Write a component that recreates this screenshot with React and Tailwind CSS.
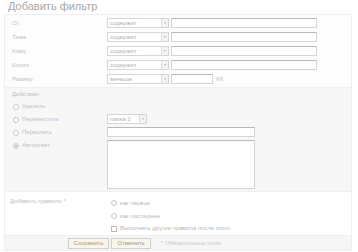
import React from 'react';

const font = { fontFamily: '"Liberation Sans", Arial, sans-serif' };

const Select = ({ value, w = 'w-[62px]' }) => (
  <div className={`${w} h-[10px] flex items-center border border-[#d6d6d6] bg-white`}>
    <span className="flex-1 pl-[2px] text-[6px] leading-none text-[#b0b0b0] truncate">{value}</span>
    <span className="w-[7px] h-full border-l border-[#dcdcdc] bg-[#f3f3f3] flex items-center justify-center text-[4px] text-[#bbb]">▾</span>
  </div>
);

const Input = ({ w = 'w-[146px]', h = 'h-[10px]' }) => (
  <div className={`${w} ${h} border border-[#d4d4d4] border-t-[#b8b8b8] bg-white`} />
);

const Radio = ({ checked }) => (
  <span className="w-[6px] h-[6px] rounded-full border border-[#c8c8c8] bg-white flex items-center justify-center">
    {checked && <span className="w-[2px] h-[2px] rounded-full bg-[#999]" />}
  </span>
);

const FieldRow = ({ label, children }) => (
  <div className="flex items-center h-[14px]">
    <span className="w-[102px] pl-[7px] text-[6px] text-[#c0c0c0]">{label}</span>
    <div className="flex items-center gap-[2px]">{children}</div>
  </div>
);

export default function App() {
  return (
    <div className="w-[358px] h-[252px] bg-white overflow-hidden" style={font}>
      <div className="h-[14px] pl-[8px] pt-[1px] text-[11px] leading-[11px] text-[#a8a8a8]">Добавить фильтр</div>
      <div className="mx-[4px] w-[348px] border border-[#eeeeee] bg-[#fdfdfd]">
        <div className="pt-[1px] pb-[1px]">
          {['От', 'Тема', 'Кому', 'Копия'].map((l) => (
            <FieldRow key={l} label={l}>
              <Select value="содержит" />
              <Input />
            </FieldRow>
          ))}
          <FieldRow label="Размер">
            <Select value="меньше" />
            <Input w="w-[42px]" />
            <span className="ml-[1px] text-[6px] text-[#bbb]">Кб</span>
          </FieldRow>
        </div>

        <div className="bg-[#f7f7f7] border-t border-[#efefef] h-[104px] pt-[2px]">
          <div className="pl-[7px] h-[10px] text-[6px] text-[#c0c0c0]">Действие:</div>
          <div className="flex">
            <div className="w-[102px] pl-[8px] flex flex-col">
              {['Удалить', 'Переместить', 'Переслать', 'Автоответ'].map((l, i) => (
                <div key={l} className="h-[13px] flex items-center gap-[3px]">
                  <Radio checked={i === 3} />
                  <span className="text-[6px] text-[#c0c0c0]">{l}</span>
                </div>
              ))}
            </div>
            <div className="flex flex-col gap-[3px] pt-[14px]">
              <Select value="папка 1" w="w-[40px]" />
              <Input w="w-[148px]" />
              <Input w="w-[148px]" h="h-[49px]" />
            </div>
          </div>
        </div>

        <div className="flex border-t border-[#f0f0f0] bg-white h-[44px] pt-[5px]">
          <div className="w-[102px] pl-[5px] text-[6px] text-[#c0c0c0]">Добавить правило *</div>
          <div className="flex flex-col pl-[4px]">
            <div className="h-[13px] flex items-center gap-[3px]">
              <Radio />
              <span className="text-[6px] text-[#b8b8b8]">как первое</span>
            </div>
            <div className="h-[13px] flex items-center gap-[3px]">
              <Radio />
              <span className="text-[6px] text-[#b8b8b8]">как последнее</span>
            </div>
            <div className="h-[13px] flex items-center gap-[3px]">
              <span className="w-[6px] h-[6px] border border-[#bbb] bg-white" />
              <span className="text-[6px] text-[#b8b8b8]">Выполнять другие правила после этого</span>
            </div>
          </div>
        </div>

        <div className="flex items-center h-[15px] bg-[#f6f6f6] border-t border-[#eeeeee] pl-[63px] gap-[2px]">
          <button className="h-[11px] w-[41px] border border-[#cfcfcf] bg-[#f9f5e8] text-[6px] text-[#999] leading-none">Сохранить</button>
          <button className="h-[11px] w-[40px] border border-[#cfcfcf] bg-[#f9f5e8] text-[6px] text-[#999] leading-none">Отменить</button>
          <span className="ml-[8px] text-[6px] text-[#c8c8c8]">* Обязательные поля</span>
        </div>
      </div>
    </div>
  );
}
